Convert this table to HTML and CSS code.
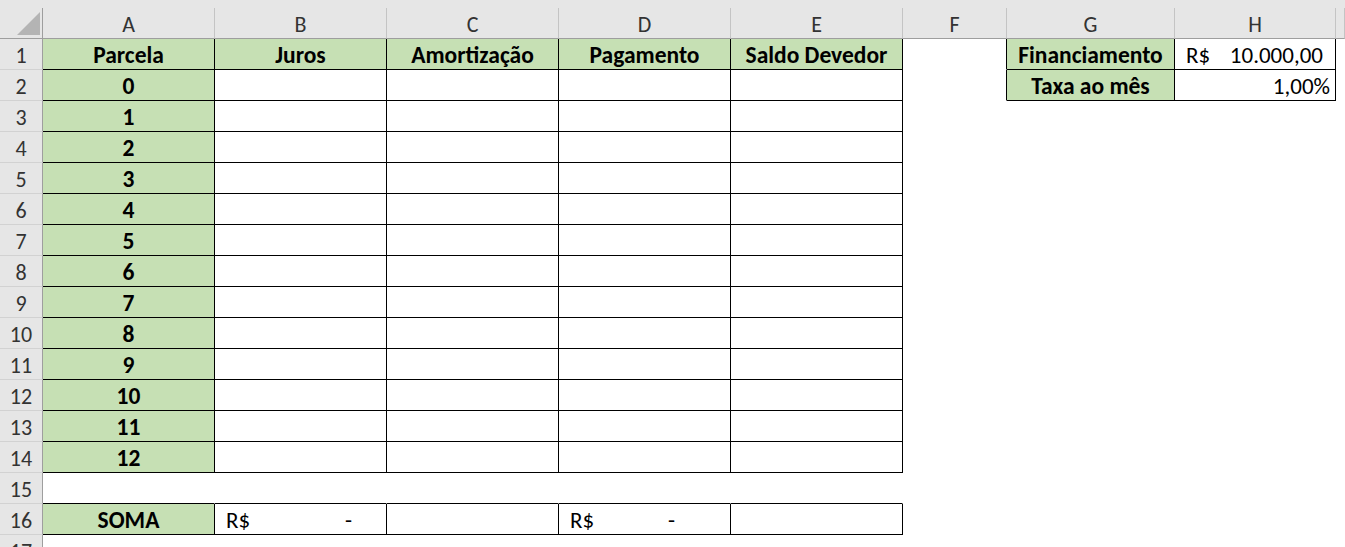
FILE: index.html
```html
<!DOCTYPE html>
<html lang="pt-BR">
<head>
<meta charset="utf-8">
<title>Planilha</title>
<link rel="stylesheet" href="styles.css">
</head>
<body>
<div class="topbar"></div>
<div class="sheet">
  <div class="row">
    <div class="cell corner"><svg width="23" height="23" viewBox="0 0 23 23"><polygon points="0,23 23,23 23,0" fill="#b4b4b4"/></svg></div>
    <div class="cell ch">A</div><div class="cell ch">B</div><div class="cell ch">C</div><div class="cell ch">D</div><div class="cell ch">E</div><div class="cell ch">F</div><div class="cell ch">G</div><div class="cell ch">H</div><div class="cell ch"></div>
  </div>
  <div class="row">
    <div class="cell rh">1</div>
    <div class="cell g br bb b">Parcela</div><div class="cell g br bb b">Juros</div><div class="cell g br bb b">Amortização</div><div class="cell g br bb b">Pagamento</div><div class="cell g br bb b">Saldo Devedor</div>
    <div class="cell br"></div>
    <div class="cell g br bb b">Financiamento</div>
    <div class="cell br bb money"><span>R$</span><span>10.000,00</span></div>
    <div class="cell"></div>
  </div>
  <div class="row">
    <div class="cell rh">2</div>
    <div class="cell g br bb b">0</div><div class="cell br bb"></div><div class="cell br bb"></div><div class="cell br bb"></div><div class="cell br bb"></div>
    <div class="cell br"></div>
    <div class="cell g br bb b">Taxa ao mês</div>
    <div class="cell br bb pct">1,00%</div>
    <div class="cell"></div>
  </div>
  <div class="row"><div class="cell rh">3</div><div class="cell g br bb b">1</div><div class="cell br bb"></div><div class="cell br bb"></div><div class="cell br bb"></div><div class="cell br bb"></div><div class="cell"></div><div class="cell"></div><div class="cell"></div><div class="cell"></div></div>
  <div class="row"><div class="cell rh">4</div><div class="cell g br bb b">2</div><div class="cell br bb"></div><div class="cell br bb"></div><div class="cell br bb"></div><div class="cell br bb"></div><div class="cell"></div><div class="cell"></div><div class="cell"></div><div class="cell"></div></div>
  <div class="row"><div class="cell rh">5</div><div class="cell g br bb b">3</div><div class="cell br bb"></div><div class="cell br bb"></div><div class="cell br bb"></div><div class="cell br bb"></div><div class="cell"></div><div class="cell"></div><div class="cell"></div><div class="cell"></div></div>
  <div class="row"><div class="cell rh">6</div><div class="cell g br bb b">4</div><div class="cell br bb"></div><div class="cell br bb"></div><div class="cell br bb"></div><div class="cell br bb"></div><div class="cell"></div><div class="cell"></div><div class="cell"></div><div class="cell"></div></div>
  <div class="row"><div class="cell rh">7</div><div class="cell g br bb b">5</div><div class="cell br bb"></div><div class="cell br bb"></div><div class="cell br bb"></div><div class="cell br bb"></div><div class="cell"></div><div class="cell"></div><div class="cell"></div><div class="cell"></div></div>
  <div class="row"><div class="cell rh">8</div><div class="cell g br bb b">6</div><div class="cell br bb"></div><div class="cell br bb"></div><div class="cell br bb"></div><div class="cell br bb"></div><div class="cell"></div><div class="cell"></div><div class="cell"></div><div class="cell"></div></div>
  <div class="row"><div class="cell rh">9</div><div class="cell g br bb b">7</div><div class="cell br bb"></div><div class="cell br bb"></div><div class="cell br bb"></div><div class="cell br bb"></div><div class="cell"></div><div class="cell"></div><div class="cell"></div><div class="cell"></div></div>
  <div class="row"><div class="cell rh">10</div><div class="cell g br bb b">8</div><div class="cell br bb"></div><div class="cell br bb"></div><div class="cell br bb"></div><div class="cell br bb"></div><div class="cell"></div><div class="cell"></div><div class="cell"></div><div class="cell"></div></div>
  <div class="row"><div class="cell rh">11</div><div class="cell g br bb b">9</div><div class="cell br bb"></div><div class="cell br bb"></div><div class="cell br bb"></div><div class="cell br bb"></div><div class="cell"></div><div class="cell"></div><div class="cell"></div><div class="cell"></div></div>
  <div class="row"><div class="cell rh">12</div><div class="cell g br bb b">10</div><div class="cell br bb"></div><div class="cell br bb"></div><div class="cell br bb"></div><div class="cell br bb"></div><div class="cell"></div><div class="cell"></div><div class="cell"></div><div class="cell"></div></div>
  <div class="row"><div class="cell rh">13</div><div class="cell g br bb b">11</div><div class="cell br bb"></div><div class="cell br bb"></div><div class="cell br bb"></div><div class="cell br bb"></div><div class="cell"></div><div class="cell"></div><div class="cell"></div><div class="cell"></div></div>
  <div class="row"><div class="cell rh">14</div><div class="cell g br bb b">12</div><div class="cell br bb"></div><div class="cell br bb"></div><div class="cell br bb"></div><div class="cell br bb"></div><div class="cell"></div><div class="cell"></div><div class="cell"></div><div class="cell"></div></div>
  <div class="row"><div class="cell rh">15</div><div class="cell bb"></div><div class="cell bb"></div><div class="cell bb"></div><div class="cell bb"></div><div class="cell bb"></div><div class="cell"></div><div class="cell"></div><div class="cell"></div><div class="cell"></div></div>
  <div class="row">
    <div class="cell rh">16</div>
    <div class="cell g br bb b">SOMA</div>
    <div class="cell br bb acct"><span>R$</span><span>-</span></div>
    <div class="cell br bb"></div>
    <div class="cell br bb acct acct-d"><span>R$</span><span>-</span></div>
    <div class="cell br bb"></div>
    <div class="cell"></div><div class="cell"></div><div class="cell"></div><div class="cell"></div>
  </div>
  <div class="row"><div class="cell rh">17</div><div class="cell"></div><div class="cell"></div><div class="cell"></div><div class="cell"></div><div class="cell"></div><div class="cell"></div><div class="cell"></div><div class="cell"></div><div class="cell"></div></div>
</div>
</body>
</html>
```
FILE: styles.css
```css
html, body {
  margin: 0;
  padding: 0;
  background: #ffffff;
  overflow: hidden;
}
body {
  font-family: "Carlito", "Liberation Sans", Arial, sans-serif;
  color: #000;
}
.topbar {
  height: 8px;
  background: #e6e6e6;
}
.sheet {
  width: 100%;
}
.row {
  display: grid;
  grid-template-columns: 43px 172px 172px 172px 172px 172px 104px 168px 161px 1fr;
  height: 31px;
}
.cell {
  box-sizing: border-box;
  border-right: 1px solid transparent;
  border-bottom: 1px solid transparent;
  display: flex;
  align-items: center;
  justify-content: center;
  padding-top: 2px;
  font-size: 23.5px;
  white-space: nowrap;
  overflow: hidden;
}
.ch {
  background: #e6e6e6;
  border-right-color: #c4c4c4;
  border-bottom-color: #9e9e9e;
  font-size: 22px;
  color: #333;
}
.rh {
  background: #e6e6e6;
  border-right-color: #9e9e9e;
  border-bottom-color: #d2d2d2;
  font-size: 22px;
  color: #333;
}
.corner {
  background: #e6e6e6;
  border-right-color: #9e9e9e;
  border-bottom-color: #9e9e9e;
  justify-content: flex-end;
  align-items: flex-end;
  padding: 0 2px 3px 0;
}
.corner svg {
  display: block;
}
.g { background: #c6e0b4; }
.br { border-right-color: #000; }
.bb { border-bottom-color: #000; }
.b { font-weight: bold; }
.acct {
  justify-content: space-between;
  padding: 2px 34px 0 11px;
  font-size: 23px;
}
.acct-d {
  padding-right: 55px;
}
.money {
  justify-content: space-between;
  padding: 2px 12px 0 11px;
  font-size: 23px;
}
.pct {
  justify-content: flex-end;
  padding-right: 5px;
  font-size: 23px;
}
```
